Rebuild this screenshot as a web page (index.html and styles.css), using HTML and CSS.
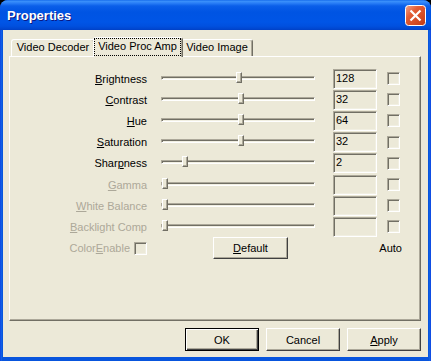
FILE: index.html
```html
<!DOCTYPE html>
<html lang="en">

<head>
    <meta charset="UTF-8">
    <meta name="viewport" content="width=device-width, initial-scale=1.0">
    <title>Properties</title>

    <link rel="stylesheet" href="styles.css">

</head>

<body>

    <div class="window">

        <div class="titlebar">
            <span class="title">Properties</span>
            <div class="close">
                <svg width="21" height="21" viewBox="0 0 21 21">
                    <defs>
                        <linearGradient id="closeGrad" x1="0" y1="0" x2="1" y2="1">
                            <stop offset="0" stop-color="#f2a68e" />
                            <stop offset="0.35" stop-color="#e35d35" />
                            <stop offset="1" stop-color="#c23a14" />
                        </linearGradient>
                    </defs>
                    <rect x="0.5" y="0.5" width="20" height="20" rx="3" fill="url(#closeGrad)" stroke="#fff" />
                    <path d="M5.5 5.5 L15.5 15.5 M15.5 5.5 L5.5 15.5" stroke="#fff" stroke-width="2.2" />
                </svg>
            </div>
        </div>

        <div class="client">

            <div class="tabs">
                <div class="tab tab-decoder">Video Decoder</div>
                <div class="tab tab-proc active"><span class="focus">Video Proc Amp</span></div>
                <div class="tab tab-image">Video Image</div>
            </div>

            <div class="panel">
                <div class="controls">

                    <!-- ativos -->
                    <div class="label"><u>B</u>rightness</div>
                    <div class="slider"><div class="track"></div><div class="thumb" style="left: 75px"></div></div>
                    <div class="value">128</div>
                    <div class="check"></div>

                    <div class="label"><u>C</u>ontrast</div>
                    <div class="slider"><div class="track"></div><div class="thumb" style="left: 77px"></div></div>
                    <div class="value">32</div>
                    <div class="check"></div>

                    <div class="label"><u>H</u>ue</div>
                    <div class="slider"><div class="track"></div><div class="thumb" style="left: 77px"></div></div>
                    <div class="value">64</div>
                    <div class="check"></div>

                    <div class="label"><u>S</u>aturation</div>
                    <div class="slider"><div class="track"></div><div class="thumb" style="left: 77px"></div></div>
                    <div class="value">32</div>
                    <div class="check"></div>

                    <div class="label">Shar<u>p</u>ness</div>
                    <div class="slider"><div class="track"></div><div class="thumb" style="left: 21px"></div></div>
                    <div class="value">2</div>
                    <div class="check"></div>

                    <!-- desativados -->
                    <div class="label disabled"><u>G</u>amma</div>
                    <div class="slider"><div class="track"></div><div class="thumb" style="left: 1px"></div></div>
                    <div class="value"></div>
                    <div class="check"></div>

                    <div class="label disabled"><u>W</u>hite Balance</div>
                    <div class="slider"><div class="track"></div><div class="thumb" style="left: 1px"></div></div>
                    <div class="value"></div>
                    <div class="check"></div>

                    <div class="label disabled"><u>B</u>acklight Comp</div>
                    <div class="slider"><div class="track"></div><div class="thumb" style="left: 1px"></div></div>
                    <div class="value"></div>
                    <div class="check"></div>

                    <div class="color-enable disabled">Color<u>E</u>nable <div class="check"></div></div>
                    <div class="btn btn-default-pos"><u>D</u>efault</div>
                    <div></div>
                    <div class="auto">Auto</div>

                </div>
            </div>

            <div class="buttons">
                <div class="btn default">OK</div>
                <div class="btn">Cancel</div>
                <div class="btn"><u>A</u>pply</div>
            </div>

        </div>

    </div>

</body>

</html>
```

FILE: styles.css
```css
* {
    box-sizing: border-box;
}

html,
body {
    margin: 0;
}

body {
    background-color: #000;
    font-family: 'Liberation Sans', Arial, sans-serif;
    font-size: 11px;
    color: #000;
}

.window {
    width: 431px;
    height: 361px;
    border-radius: 8px 8px 0 0;
    overflow: hidden;
    background: linear-gradient(to right, #0831d9 0, #166aee 1px, #0855dd 2px, #0855dd 429px, #166aee 430px, #0831d9 431px);
    display: flex;
    flex-direction: column;
}

.titlebar {
    height: 30px;
    flex: none;
    display: flex;
    align-items: center;
    padding: 0 5px 0 7px;
    background: linear-gradient(to bottom, #0a5fe7 0, #3d93fb 1px, #2b80f7 3px, #0a5ee9 6px, #0054e3 12px, #0055e6 22px, #0050df 26px, #0046cf 29px, #003fc4 30px);
}

.title {
    flex: 1;
    color: #fff;
    font-weight: bold;
    font-size: 13px;
    text-shadow: 1px 1px #0a1883;
}

.close {
    width: 21px;
    height: 21px;
    margin-top: 1px;
}

.close svg {
    display: block;
}

.client {
    flex: 1;
    margin: 0 3px 4px;
    background-color: #ece9d8;
    padding: 7px 7px 6px 6px;
    display: flex;
    flex-direction: column;
}

/* abas */
.tabs {
    display: flex;
    align-items: flex-end;
    height: 19px;
    padding-left: 2px;
    position: relative;
    z-index: 1;
}

.tab {
    height: 17px;
    padding-top: 1px;
    text-align: center;
    line-height: 13px;
    white-space: nowrap;
    background-color: #ece9d8;
    border: 1px solid;
    border-color: #fff #716f64 transparent #fff;
    border-bottom: none;
    border-radius: 3px 3px 0 0;
    box-shadow: inset -1px 0 #aca899;
}

.tab-decoder {
    width: 84px;
}

.tab-proc {
    width: 86px;
}

.tab-image {
    width: 72px;
}

.tab.active {
    width: 90px;
    height: 20px;
    margin: 0 -2px -1px;
    padding: 0 1px 1px 0;
    position: relative;
    z-index: 2;
}

.focus {
    display: block;
    height: 100%;
    padding-top: 1px;
    border: 1px dotted #000;
}

/* painel */
.panel {
    height: 265px;
    flex: none;
    border: 1px solid;
    border-color: #fff #716f64 #716f64 #fff;
    box-shadow: inset -1px -1px #aca899;
    padding-top: 11px;
}

.controls {
    display: grid;
    grid-template-columns: 137px 169px 61px 23px;
    grid-auto-rows: 21.2px;
    align-items: center;
}

.label {
    text-align: right;
    white-space: nowrap;
}

.disabled {
    color: #aca899;
}

.slider {
    margin-left: 14px;
    width: 154px;
    height: 20px;
    position: relative;
}

.track {
    margin-top: 7px;
    height: 4px;
    border-top: 1px solid #aca899;
    border-left: 1px solid #aca899;
    border-bottom: 1px solid #fff;
    border-right: 1px solid #fff;
    box-shadow: inset 1px 1px #716f64, inset -1px -1px #f1efe2;
}

.thumb {
    position: absolute;
    top: 3px;
    width: 6px;
    height: 11px;
    background-color: #ece9d8;
    border: 1px solid;
    border-color: #fff #716f64 #716f64 #fff;
    box-shadow: inset -1px -1px #aca899;
}

.value {
    margin-left: 17px;
    width: 44px;
    height: 20px;
    line-height: 17px;
    padding-left: 2px;
    border: 1px solid;
    border-color: #aca899 #fff #fff #aca899;
    box-shadow: inset 1px 1px #716f64, inset -1px -1px #f1efe2;
}

.check {
    margin-left: 10px;
    width: 13px;
    height: 13px;
    border: 1px solid;
    border-color: #aca899 #fff #fff #aca899;
    box-shadow: inset 1px 1px #716f64, inset -1px -1px #f1efe2;
}

.color-enable {
    display: flex;
    justify-content: flex-end;
    align-items: center;
    white-space: nowrap;
}

.color-enable .check {
    margin-left: 4px;
}

.auto {
    justify-self: end;
    margin-right: -2px;
}

/* botoes */
.btn {
    width: 74px;
    height: 23px;
    display: flex;
    align-items: center;
    justify-content: center;
    background-color: #ece9d8;
    border: 1px solid;
    border-color: #fff #404040 #404040 #fff;
    box-shadow: inset -1px -1px #aca899;
}

.btn.default {
    border-color: #000;
    box-shadow: inset 1px 1px #fff, inset -1px -1px #404040, inset -2px -2px #aca899;
}

.btn-default-pos {
    margin-left: 66px;
    width: 75px;
    height: 22px;
}

.buttons {
    display: flex;
    justify-content: flex-end;
    gap: 7px;
    margin-top: 7px;
}
```
